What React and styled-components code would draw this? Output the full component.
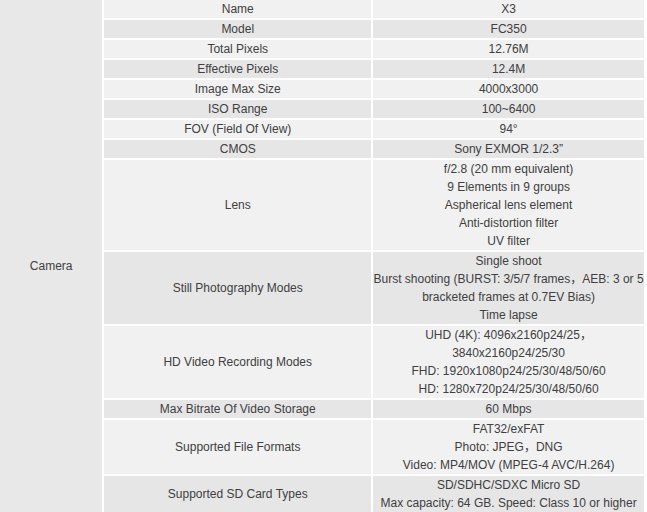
import React from "react";
import styled, { createGlobalStyle } from "styled-components";

const Global = createGlobalStyle`
  html, body {
    margin: 0;
    padding: 0;
    background: #ffffff;
    overflow: hidden;
  }
  body {
    font-family: "Liberation Sans", Arial, "Noto Sans CJK SC", sans-serif;
  }
`;

const Page = styled.div`
  width: 647px;
  height: 512px;
  overflow: hidden;
`;

const SpecTable = styled.table`
  margin: -2px 0 0 -2px;
  border-collapse: separate;
  border-spacing: 2px;
  table-layout: fixed;
  width: 648px;
  font-size: 12px;
  line-height: 18px;
  color: #404040;
`;

const Col = styled.col`
  width: ${(p) => p.$w}px;
`;

const Cell = styled.td`
  padding: 0;
  text-align: center;
  vertical-align: middle;
  white-space: nowrap;
  overflow: hidden;
  background: ${(p) => (p.$dark ? "#e6e6e6" : "#f1f1f1")};
`;

const GroupCell = styled.td`
  padding: 19px 0 0;
  text-align: center;
  vertical-align: middle;
  background: #e8e8e8;
`;

const rows = [
  ["Name", ["X3"]],
  ["Model", ["FC350"]],
  ["Total Pixels", ["12.76M"]],
  ["Effective Pixels", ["12.4M"]],
  ["Image Max Size", ["4000x3000"]],
  ["ISO Range", ["100~6400"]],
  ["FOV (Field Of View)", ["94°"]],
  ["CMOS", ["Sony EXMOR 1/2.3\u201D"]],
  [
    "Lens",
    [
      "f/2.8 (20 mm equivalent)",
      "9 Elements in 9 groups",
      "Aspherical lens element",
      "Anti-distortion filter",
      "UV filter",
    ],
  ],
  [
    "Still Photography Modes",
    [
      "Single shoot",
      "Burst shooting (BURST: 3/5/7 frames\uFF0CAEB: 3 or 5",
      "bracketed frames at 0.7EV Bias)",
      "Time lapse",
    ],
  ],
  [
    "HD Video Recording Modes",
    [
      "UHD (4K): 4096x2160p24/25\uFF0C",
      "3840x2160p24/25/30",
      "FHD: 1920x1080p24/25/30/48/50/60",
      "HD: 1280x720p24/25/30/48/50/60",
    ],
  ],
  ["Max Bitrate Of Video Storage", ["60 Mbps"]],
  [
    "Supported File Formats",
    ["FAT32/exFAT", "Photo: JPEG\uFF0CDNG", "Video: MP4/MOV (MPEG-4 AVC/H.264)"],
  ],
  [
    "Supported SD Card Types",
    ["SD/SDHC/SDXC Micro SD", "Max capacity: 64 GB. Speed: Class 10 or higher"],
  ],
];

export default function App() {
  return (
    <Page>
      <Global />
      <SpecTable>
        <colgroup>
          <Col $w={102} />
          <Col $w={266} />
          <Col $w={270} />
        </colgroup>
        <tbody>
          {rows.map(([label, lines], i) => (
            <tr key={label}>
              {i === 0 && <GroupCell rowSpan={rows.length}>Camera</GroupCell>}
              <Cell $dark={i % 2 === 1}>{label}</Cell>
              <Cell $dark={i % 2 === 1}>
                {lines.map((l, j) => (
                  <React.Fragment key={j}>
                    {j > 0 && <br />}
                    {l}
                  </React.Fragment>
                ))}
              </Cell>
            </tr>
          ))}
        </tbody>
      </SpecTable>
    </Page>
  );
}
